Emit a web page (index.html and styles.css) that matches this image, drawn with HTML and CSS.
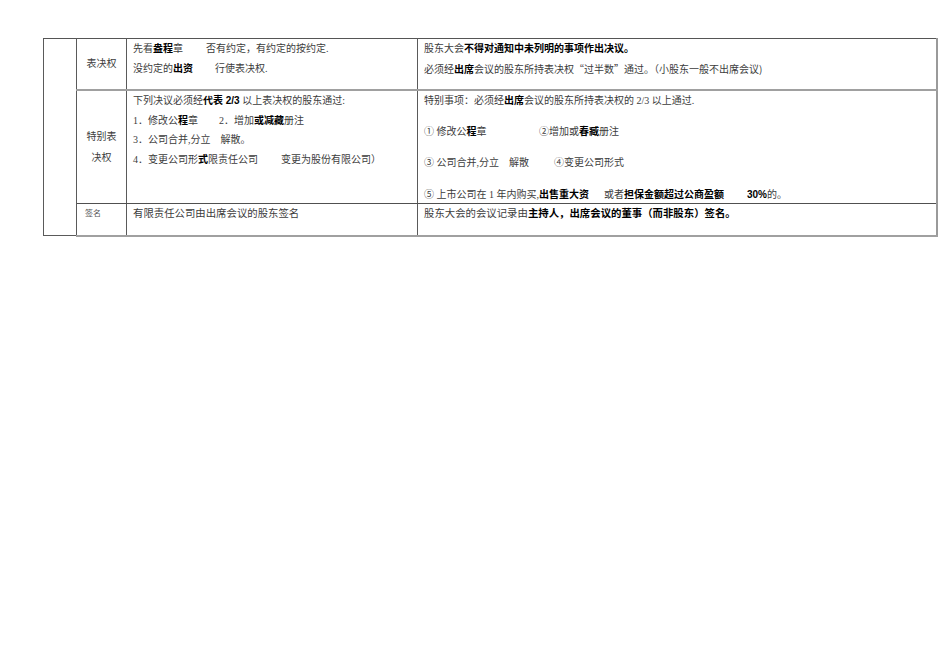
FILE: index.html
```html
<!DOCTYPE html>
<html lang="zh">
<head>
<meta charset="utf-8">
<title>表决权</title>
<link rel="stylesheet" href="styles.css">
</head>
<body>
<table class="sheet">
  <colgroup>
    <col class="c1"><col class="c2"><col class="c3"><col class="c4">
  </colgroup>
  <tr class="r1">
    <td class="side" rowspan="3"></td>
    <td class="head">表决权</td>
    <td class="body">
      <div class="ln"><span class="seg s73">先看<b>盎程</b>章</span>否有约定，有约定的按约定.</div>
      <div class="ln"><span class="seg s82">没约定的<b>出资</b></span>行使表决权.</div>
    </td>
    <td class="body">
      <div class="ln">股东大会<b>不得对通知中未列明的事项作出决议。</b></div>
      <div class="ln">必须经<b>出席</b>会议的股东所持表决权<span class="cj">“过半数”</span>通过。<span class="cj">（小股东一般不出席会议)</span></div>
    </td>
  </tr>
  <tr class="r2">
    <td class="head tall">特别表<br>决权</td>
    <td class="body list">
      <div class="ln">下列决议必须经<b>代表 2/3</b> 以上表决权的股东通过:</div>
      <div class="ln"><span class="seg s86">1．修改公<b>程</b>章</span>2．增加<b>或减藏</b>册注</div>
      <div class="ln">3．公司合并,分立　解散。</div>
      <div class="ln"><span class="seg s148">4．变更公司形<b>式</b>限责任公司</span>变更为股份有限公司）</div>
    </td>
    <td class="body wide">
      <div class="ln">特别事项：必须经<b>出席</b>会议的股东所持表决权的 2/3 以上通过.</div>
      <div class="ln"><span class="seg s115">① 修改公<b>程</b>章</span>②增加或<b>春臧</b>册注</div>
      <div class="ln"><span class="seg s130">③ 公司合并,分立　解散</span>④变更公司形式</div>
      <div class="ln"><span class="seg s180">⑤ 上市公司在 1 年内购买,<b>出售重大资</b></span><span class="seg s143">或者<b>担保金额超过公商盈额</b></span><b>30%</b>的。</div>
    </td>
  </tr>
  <tr class="r3">
    <td class="sign">签名</td>
    <td class="body">有限责任公司由出席会议的股东签名</td>
    <td class="body">股东大会的会议记录由<b>主持人，出席会议的董事（而非股东）签名。</b></td>
  </tr>
</table>
</body>
</html>
```
FILE: styles.css
```css
html, body {
  margin: 0;
  padding: 0;
  background: #ffffff;
}
body {
  padding: 38px 0 0 43px;
  font-family: "Liberation Serif", "Noto Sans CJK SC", serif;
  font-size: 10px;
  color: #3c3c3c;
}
.sheet {
  border-collapse: collapse;
  table-layout: fixed;
  width: 893px;
}
.c1 { width: 33px; }
.c2 { width: 50px; }
.c3 { width: 291px; }
.c4 { width: 519px; }

.sheet td {
  border: 1px solid #5a5a5a;
  padding: 0;
  vertical-align: top;
}
.r1 td { border-top: 1px solid #555555; }
.r1 td:not(.side) { border-bottom: 2px solid #a0a0a0; }
.r2 td { border-bottom: 1px solid #505050; }
.r3 td, .side { border-bottom: 2px solid #a0a0a0; }
.sheet td:last-child { border-right: 2px solid #9a9a9a; }

.r1 { height: 51px; }
.r2 { height: 114px; }
.r3 { height: 32px; }

.head {
  text-align: center;
  vertical-align: middle !important;
  line-height: 21px;
  font-size: 10px;
}
.body {
  padding: 0 6px 0 6px !important;
  line-height: 20px;
  white-space: nowrap;
}
.r3 .body { font-size: 10.4px; }
.sign {
  font-size: 8px;
  padding: 0 0 0 8px !important;
  line-height: 19px;
  color: #555555;
}
.cj { font-family: "Noto Sans CJK SC", sans-serif; }
.list .ln { line-height: 19.5px; }
.list .ln:first-child { line-height: 20px; }
.wide .ln { line-height: 14px; }
.wide .ln:first-child { line-height: 20px; }
.wide .ln:nth-child(2) { margin-top: 14px; }
.wide .ln:nth-child(3) { margin-top: 17px; }
.wide .ln:nth-child(4) { margin-top: 18px; }

b {
  font-family: "Liberation Sans", "Noto Sans CJK SC", sans-serif;
  font-weight: bold;
  color: #000000;
}
.seg { display: inline-block; }
.s73 { width: 73px; }
.s82 { width: 82px; }
.s86 { width: 86px; }
.s148 { width: 148px; }
.s115 { width: 115px; }
.s130 { width: 130px; }
.s180 { width: 180px; }
.s143 { width: 143px; }
```
